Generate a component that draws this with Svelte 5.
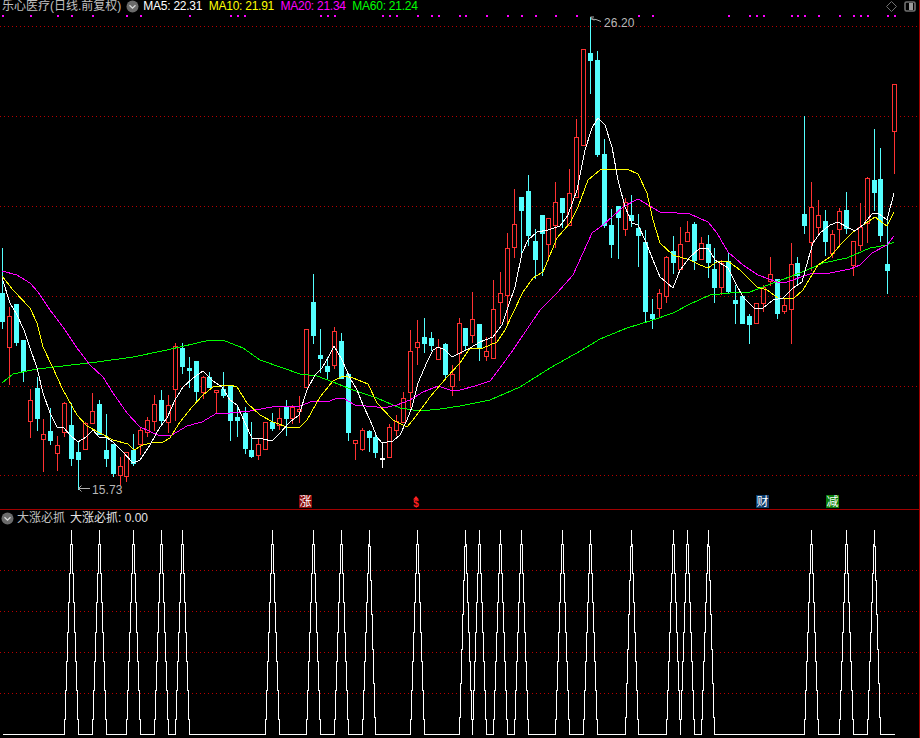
<script>
  // x, bodyTop, bodyBottom, wickTop, wickBottom, colour
  const raw = `2 293 321 248 328 c;9 316 347 307 384 r;16 304 342 304 345 c;23 340 371 340 381 c;30 400 421 389 437 r;37 388 418 377 430 c;43 434 439 419 471 r;50 431 440 408 444 c;57 445 453 436 470 r;64 403 432 402 436 r;71 425 458 403 465 c;78 452 459 442 489 c;85 423 449 422 449 r;92 411 423 393 423 r;99 404 434 400 434 c;106 450 458 414 466 c;113 444 473 444 476 c;120 466 475 457 485 r;126 452 476 452 481 r;133 450 463 434 465 c;140 430 444 428 454 r;147 420 432 417 436 r;154 404 421 395 430 r;161 400 420 390 423 c;168 405 422 395 432 r;175 346 389 343 420 r;182 348 366 343 373 c;189 368 370 357 387 c;196 361 391 361 400 c;203 377 392 376 398 r;209 377 387 372 387 c;216 390 392 390 413 r;223 389 395 372 397 c;230 385 420 385 440 c;237 417 420 405 436 c;245 413 448 407 453 c;251 450 456 422 457 c;258 444 455 438 459 r;265 422 449 422 449 r;272 422 428 413 430 c;279 418 425 408 429 r;286 407 418 400 435 c;292 407 418 405 423 r;299 409 411 396 422 r;306 329 387 329 387 r;313 302 335 274 343 c;320 355 358 329 372 c;327 366 371 357 378 c;334 331 365 327 368 r;341 341 378 333 378 c;348 374 432 374 440 c;355 440 443 440 459 r;362 430 449 428 450 r;369 431 437 430 451 c;375 437 452 433 457 c;382 458 459 443 467 w;389 427 457 424 457 r;396 421 430 415 435 r;403 398 422 392 422 r;410 351 392 330 407 r;417 342 347 320 364 r;424 337 343 318 352 c;431 338 345 332 350 c;438 347 359 339 359 r;445 344 374 343 378 c;452 374 386 365 395 r;459 323 353 318 380 r;465 328 345 328 350 c;472 319 335 292 342 r;479 324 348 324 360 c;486 351 356 337 360 r;493 309 358 280 358 r;500 293 302 272 323 r;507 248 295 233 323 r;514 224 247 189 257 r;521 197 210 197 257 c;528 191 235 175 245 c;535 241 259 229 278 c;542 215 233 215 275 c;548 218 244 218 260 r;555 202 225 182 247 r;562 198 212 198 227 c;569 193 225 169 225 r;576 137 197 119 197 r;583 49 145 49 145 r;590 53 60 17 93 c;597 60 154 51 156 c;604 154 225 139 227 c;611 225 244 209 257 c;618 206 217 206 258 c;625 202 229 198 235 r;631 215 220 195 226 c;638 228 235 214 266 c;645 242 311 230 322 c;652 314 318 299 328 c;659 293 308 289 316 r;666 257 296 256 302 r;673 251 262 236 273 c;680 244 269 227 269 r;687 232 241 221 241 r;694 224 260 222 269 c;701 243 259 237 259 r;708 244 262 235 277 c;714 269 287 248 302 c;721 263 287 260 294 r;728 261 291 253 293 c;735 300 303 285 323 c;742 296 323 296 323 c;749 316 324 314 343 c;756 303 323 303 323 r;763 287 303 285 311 r;770 274 281 257 285 r;777 279 313 279 318 c;784 305 311 298 313 r;791 264 309 243 343 r;797 263 275 257 285 c;804 214 225 116 233 c;811 207 242 182 270 r;818 215 227 200 233 r;825 221 241 210 255 c;832 234 253 230 257 r;839 211 229 208 246 r;846 210 228 192 233 c;853 241 265 241 275 r;860 227 245 203 250 r;867 178 223 177 242 r;874 180 192 129 210 c;880 179 235 148 241 c;887 264 270 217 293 c;894 84 131 84 173 r`;
  const candles = raw.split(';').map((s) => {
    const p = s.split(' ');
    return { x: +p[0], t: +p[1], b: +p[2], wt: +p[3], wb: +p[4], c: p[5] };
  });

  const lines = [
    { cls: 'm60', pts: '2,383 13,374 37,369 63,366 97,362 133,357 167,350 210,340 223,340 230,343 243,348 260,360 283,368 300,374 317,376 333,382 353,390 377,398 400,408 420,411 440,409 460,406 490,400 520,387 550,368 582,350 600,339 627,328 653,320 673,313 690,304 710,295 730,293 750,292 773,283 800,273 823,263 847,258 870,248 887,245 894,242' },
    { cls: 'm20', pts: '2,271 17,275 30,283 38,292 50,310 63,327 77,348 90,365 103,377 113,393 127,413 140,427 160,436 172,435 187,426 202,422 217,413 230,413 250,411 277,406 300,406 313,401 330,401 337,398 343,398 355,405 377,407 383,408 397,405 410,400 423,392 438,386 450,390 460,390 475,386 490,381 500,368 513,350 540,310 557,293 573,275 592,233 603,225 623,207 638,199 660,212 677,213 690,214 708,222 717,233 728,252 743,265 758,275 777,282 787,282 810,274 830,273 850,269 860,265 872,253 887,245 894,236' },
    { cls: 'm10', pts: '2,276 13,290 30,308 37,323 43,347 53,368 63,390 77,415 87,426 100,433 113,440 128,444 134,450 143,445 155,442 163,442 170,438 180,422 192,407 203,395 213,387 230,385 237,387 247,403 260,415 273,422 287,427 299,428 307,420 320,397 333,381 343,376 353,378 368,384 377,403 393,420 407,427 413,420 430,397 447,377 460,363 470,348 483,348 497,342 505,330 513,313 523,292 533,278 543,272 557,238 570,223 578,207 588,180 600,170 627,169 638,174 647,193 653,220 660,243 673,255 690,260 700,265 708,268 718,261 728,261 740,270 757,287 767,290 778,298 793,299 803,290 812,275 818,265 830,257 842,243 853,232 863,225 875,217 887,226 894,212' },
    { cls: 'm5', pts: '2,278 10,303 17,315 24,330 30,348 37,368 43,393 50,413 57,427 64,428 70,435 78,442 86,437 93,430 99,437 107,438 113,442 123,452 133,463 140,460 150,445 160,427 167,418 175,400 183,387 193,378 203,371 213,381 222,387 230,400 237,405 245,423 252,438 263,439 272,441 280,433 290,422 299,415 307,390 315,375 322,368 328,358 334,346 342,360 350,378 357,390 363,405 370,420 377,437 382,443 393,441 400,435 407,420 412,407 418,383 427,362 433,350 438,347 445,350 452,357 460,353 470,348 480,342 493,337 502,325 508,307 515,287 522,253 528,240 537,232 548,230 560,226 568,215 577,190 585,150 592,128 598,118 605,125 612,147 618,180 625,207 632,223 638,225 645,240 653,260 660,277 673,288 680,270 690,257 700,248 708,248 715,260 728,268 735,282 743,297 755,309 763,308 773,300 783,298 793,288 802,282 808,260 813,243 820,233 830,225 838,222 847,227 855,231 863,225 872,214 878,213 887,220 894,193' }
  ];

  const gridMain = [26, 116, 206, 296, 386, 475];
  const gridSub = [60, 101, 142, 183];
  const dots = [2,30,57,71,92,126,140,189,230,237,244,320,327,334,382,389,396,417,431,438,459,465,486,507,521,535,555,576,638,652,728,749,756,763,791,797,804,818,839,853,860,867,887,894];

  const peaks = new Set([71,99,133,161,182,272,313,341,369,417,465,479,500,521,562,590,631,673,687,708,811,846,874]);
  const TOP = 19, BASE = 224;
  function pulsePath() {
    const xs = candles.map((c) => c.x);
    const ys = xs.map((x) => (peaks.has(x) ? TOP : BASE));
    let d = `M${xs[0] + 0.5} ${ys[0] + 0.5}`;
    for (let i = 1; i < xs.length; i++) {
      const x0 = xs[i - 1], x1 = xs[i], y0 = ys[i - 1], y1 = ys[i];
      if (y0 === y1) { d += `L${x1 + 0.5} ${y1 + 0.5}`; continue; }
      const dx = x1 - x0, s = (y1 - y0) / dx;
      const lo = Math.min(y0, y1), hi = Math.max(y0, y1);
      const cl = (v) => Math.round(Math.max(lo, Math.min(hi, v))) + 0.5;
      for (let k = 0; k <= dx; k++) {
        d += `L${x0 + k + 0.5} ${cl(y0 + (k - 0.5) * s)}L${x0 + k + 0.5} ${cl(y0 + (k + 0.5) * s)}`;
      }
    }
    return d;
  }
  const pulse = pulsePath();
</script>

<div class="screen">
  <section class="pane main">
    <header class="legend">
      <span class="title">乐心医疗(日线.前复权)</span>
      <svg class="chev" width="13" height="13" viewBox="0 0 13 13"><circle cx="6.5" cy="6.5" r="6" fill="#6a6a6a"/><path d="M3.5 5.2 6.5 8.2 9.5 5.2" fill="none" stroke="#d8d8d8" stroke-width="1.3"/></svg>
      <span class="ma w">MA5: 22.31</span>
      <span class="ma y">MA10: 21.91</span>
      <span class="ma p">MA20: 21.34</span>
      <span class="ma g">MA60: 21.24</span>
    </header>
    <svg class="plot" width="919" height="509" viewBox="0 0 919 509">
      {#each gridMain as y}
        <line class="grid" x1="0" x2="918" y1={y + 0.5} y2={y + 0.5} />
      {/each}
      {#each dots as x}
        <rect class="dot" x={x} y="15" width="2" height="2" />
      {/each}
      {#each candles as k}
        {#if k.c === 'r'}
          <path class="wick red" d={`M${k.x + 0.5} ${k.wt}V${k.t}M${k.x + 0.5} ${k.b + 1}V${k.wb + 1}`} />
          <rect class="body red" x={k.x - 1.5} y={k.t + 0.5} width="4" height={k.b - k.t} />
        {:else}
          <path class={k.c === 'w' ? 'wick white' : 'wick cyan'} d={`M${k.x + 0.5} ${k.wt}V${k.wb + 1}`} />
          <rect class={k.c === 'w' ? 'solid white' : 'solid cyan'} x={k.x - 2} y={k.t} width="5" height={k.b - k.t + 1} />
        {/if}
      {/each}
      {#each lines as l}
        <polyline class={'ma-line ' + l.cls} points={l.pts} />
      {/each}

      <path class="mark" d="M590.5 17H594M590.5 17 594 20.5M591 19 596 19.5 601 21.5" />
      <text class="val" x="604" y="27">26.20</text>
      <path class="mark" d="M78.5 488.5H90M78.5 488.5 81.5 485.5M78.5 488.5 81.5 491.5" />
      <text class="val" x="92" y="494">15.73</text>

      <path class="icon" d="M891.5 1.5 896.5 6.5 891.5 11.5 886.5 6.5Z" />
      <rect class="icon win" x="905" y="2" width="10" height="9" rx="1.5" />
      <rect class="win-fill" x="909" y="3" width="4" height="7" />

      <rect class="tag-red" x="299" y="495" width="13" height="13" />
      <text class="tag" x="305.5" y="506">涨</text>
      <path class="arrow" d="M416 496 419 499.5H413Z" />
      <text class="dollar" x="416" y="507">$</text>
      <rect class="tag-blue" x="756" y="495" width="13" height="13" />
      <text class="tag" x="762.5" y="506">财</text>
      <rect class="tag-green" x="826" y="495" width="13" height="13" />
      <text class="tag" x="832.5" y="506">减</text>
    </svg>
  </section>

  <section class="pane sub">
    <header class="legend sub-legend">
      <svg class="chev-sub" width="13" height="13" viewBox="0 0 13 13"><circle cx="6.5" cy="6.5" r="6" fill="#6a6a6a"/><path d="M3.5 5.2 6.5 8.2 9.5 5.2" fill="none" stroke="#d8d8d8" stroke-width="1.3"/></svg>
      <span class="title">大涨必抓</span>
      <span class="sub-val">大涨必抓: 0.00</span>
    </header>
    <svg class="plot" width="919" height="228" viewBox="0 0 919 228">
      {#each gridSub as y}
        <line class="grid" x1="0" x2="918" y1={y + 0.5} y2={y + 0.5} />
      {/each}
      <path class="pulse" d={pulse} />
    </svg>
  </section>
</div>

<style>
  :global(body) { margin: 0; background: #000; }
  .screen {
    width: 920px;
    height: 738px;
    box-sizing: border-box;
    display: flex;
    flex-direction: column;
    background: #000;
    border-right: 1px solid #a00000;
    overflow: hidden;
    font-family: "Liberation Sans", "Noto Sans CJK SC", sans-serif;
    font-size: 12px;
  }
  .pane { position: relative; }
  .main { height: 509px; border-bottom: 1px solid #a00000; }
  .sub { height: 228px; }
  .plot { display: block; }
  .legend {
    position: absolute;
    left: 2px;
    top: 0;
    display: flex;
    align-items: center;
    height: 13px;
    line-height: 13px;
    white-space: nowrap;
    color: #c0c0c0;
  }
  .chev { margin: 0 4px 0 5px; }
  .title { font-family: "Liberation Sans", "Noto Sans CJK SC", sans-serif; }
  .ma { margin-right: 6.5px; letter-spacing: -0.25px; }
  .w { color: #fff; }
  .y { color: #ffff00; }
  .p { color: #ff00ff; }
  .g { color: #00ff00; }
  .sub-legend { left: 1px; top: 2px; }
  .chev-sub { margin-right: 3px; }
  .sub-val { margin-left: 5px; color: #e4e4e4; }

  .grid { stroke: #b80000; stroke-width: 1; stroke-dasharray: 1 3; shape-rendering: crispEdges; }
  .dot { fill: #ff00ff; }
  .wick { fill: none; stroke-width: 1; shape-rendering: crispEdges; }
  .body { fill: #000; stroke: #ff3232; stroke-width: 1; shape-rendering: crispEdges; }
  .wick.red { stroke: #ff3232; }
  .wick.cyan { stroke: #54ffff; }
  .wick.white { stroke: #fff; }
  .solid { shape-rendering: crispEdges; }
  .solid.cyan { fill: #54ffff; }
  .solid.white { fill: #fff; }
  .ma-line { fill: none; stroke-width: 1; shape-rendering: crispEdges; }
  .m5 { stroke: #fff; }
  .m10 { stroke: #ffff00; }
  .m20 { stroke: #ff00ff; }
  .m60 { stroke: #00ff00; }
  .mark { fill: none; stroke: #b0b0b0; stroke-width: 1; }
  .val { fill: #b8b8b8; font-size: 12px; letter-spacing: 0.1px; }
  .icon { fill: none; stroke: #707070; stroke-width: 1; }
  .win { stroke-width: 1.6; }
  .win-fill { fill: #9a9a9a; }
  .tag { fill: #fff; font-size: 12px; text-anchor: middle; font-family: "Noto Sans CJK SC", sans-serif; }
  .tag-red { fill: #8a0a0a; }
  .tag-blue { fill: #0c3c6c; }
  .tag-green { fill: #0a7d0a; }
  .arrow { fill: #ff2020; }
  .dollar { fill: #ff2020; font-size: 10px; font-weight: bold; text-anchor: middle; }
  .pulse { fill: none; stroke: #fff; stroke-width: 1; shape-rendering: crispEdges; }
</style>
